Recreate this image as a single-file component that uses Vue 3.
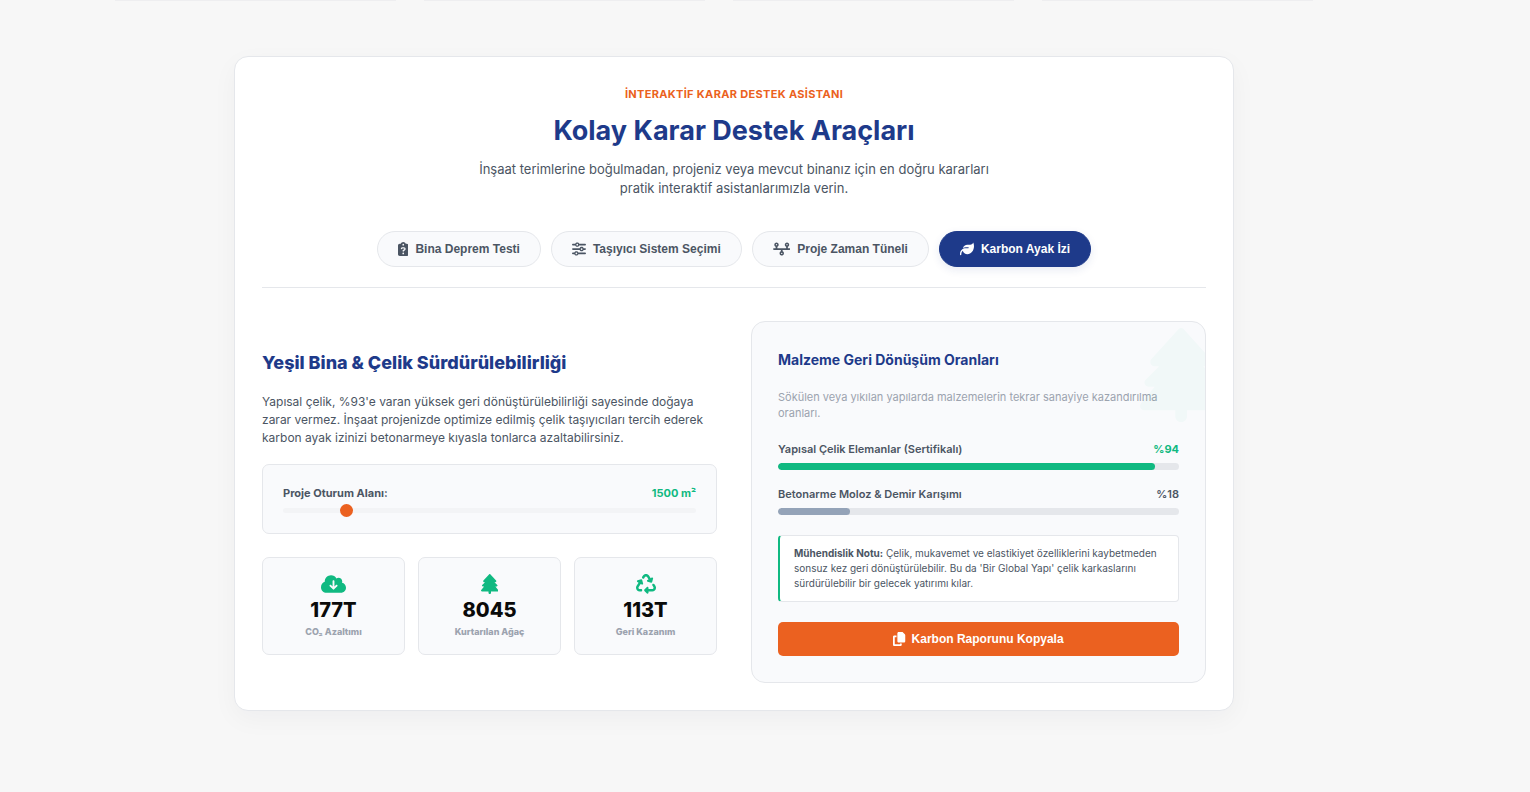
<template>
  <main class="page">
    <div class="previous-cards" aria-hidden="true">
      <div v-for="n in 4" :key="n" class="previous-card"></div>
    </div>

    <section class="tools-card">
      <header class="tools-header">
        <span class="tools-label">İNTERAKTİF KARAR DESTEK ASİSTANI</span>
        <h2 class="tools-title">Kolay Karar Destek Araçları</h2>
        <p class="tools-subtitle">
          İnşaat terimlerine boğulmadan, projeniz veya mevcut binanız için en doğru kararları pratik
          interaktif asistanlarımızla verin.
        </p>
      </header>

      <nav class="tabs">
        <button
          v-for="tab in tabs"
          :key="tab.id"
          type="button"
          class="tab"
          :class="{ active: activeTab === tab.id }"
          @click="activeTab = tab.id"
        >
          <svg class="tab-icon" :viewBox="icons[tab.icon].box" aria-hidden="true">
            <path :d="icons[tab.icon].path" />
          </svg>
          {{ tab.label }}
        </button>
      </nav>

      <div class="tool-grid">
        <!-- Hesaplayıcı -->
        <div class="calculator">
          <h3 class="calculator-title">Yeşil Bina &amp; Çelik Sürdürülebilirliği</h3>
          <p class="calculator-text">
            Yapısal çelik, %93'e varan yüksek geri dönüştürülebilirliği sayesinde doğaya zarar
            vermez. İnşaat projenizde optimize edilmiş çelik taşıyıcıları tercih ederek karbon ayak
            izinizi betonarmeye kıyasla tonlarca azaltabilirsiniz.
          </p>

          <div class="area-box">
            <div class="area-row">
              <label for="area">Proje Oturum Alanı:</label>
              <output for="area" class="green">{{ area }} m²</output>
            </div>
            <input id="area" v-model.number="area" type="range" min="100" max="10000" step="50" />
          </div>

          <div class="stats">
            <div v-for="stat in stats" :key="stat.label" class="stat">
              <svg class="stat-icon" :viewBox="icons[stat.icon].box" aria-hidden="true">
                <path :d="icons[stat.icon].path" />
              </svg>
              <strong class="stat-value">{{ stat.value }}</strong>
              <span class="stat-label">{{ stat.label }}</span>
            </div>
          </div>
        </div>

        <!-- Geri dönüşüm paneli -->
        <div class="panel">
          <svg class="panel-tree" :viewBox="icons.tree.box" aria-hidden="true">
            <path :d="icons.tree.path" />
          </svg>
          <h4 class="panel-title">Malzeme Geri Dönüşüm Oranları</h4>
          <p class="panel-text">
            Sökülen veya yıkılan yapılarda malzemelerin tekrar sanayiye kazandırılma oranları.
          </p>

          <div v-for="rate in rates" :key="rate.label" class="rate">
            <div class="rate-row">
              <span>{{ rate.label }}</span>
              <span :class="{ green: rate.green }">%{{ rate.value }}</span>
            </div>
            <div class="rate-track">
              <div
                class="rate-fill"
                :class="{ 'rate-fill-green': rate.green }"
                :style="{ width: rate.value + '%' }"
              ></div>
            </div>
          </div>

          <p class="note">
            <strong>Mühendislik Notu:</strong> Çelik, mukavemet ve elastikiyet özelliklerini
            kaybetmeden sonsuz kez geri dönüştürülebilir. Bu da 'Bir Global Yapı' çelik karkaslarını
            sürdürülebilir bir gelecek yatırımı kılar.
          </p>

          <button type="button" class="copy-button" @click="copyReport">
            <svg class="copy-icon" :viewBox="icons.copy.box" aria-hidden="true">
              <path :d="icons.copy.path" />
            </svg>
            Karbon Raporunu Kopyala
          </button>
        </div>
      </div>
    </section>
  </main>
</template>

<script setup>
import { computed, ref } from 'vue'

const icons = {
  clipboard: {
    box: '0 0 384 512',
    path: 'M192 0c-41.8 0-77.4 26.7-90.5 64H64C28.7 64 0 92.7 0 128V448c0 35.3 28.7 64 64 64H320c35.3 0 64-28.7 64-64V128c0-35.3-28.7-64-64-64H282.5C269.4 26.7 233.8 0 192 0zm0 64a32 32 0 1 1 0 64 32 32 0 1 1 0-64zM105.8 229.3c7.9-22.3 29.1-37.3 52.8-37.3h58.3c34.9 0 63.1 28.3 63.1 63.1c0 22.6-12.1 43.5-31.7 54.8L216 328.4c-.2 13-10.9 23.6-24 23.6c-13.3 0-24-10.7-24-24V314.5c0-8.6 4.6-16.5 12.1-20.8l44.3-25.4c4.7-2.7 7.6-7.7 7.6-13.1c0-8.4-6.8-15.1-15.1-15.1H158.6c-3.4 0-6.4 2.1-7.5 5.3l-.4 1.2c-4.4 12.5-18.2 19-30.6 14.6s-19-18.2-14.6-30.6l.4-1.2zM160 416a32 32 0 1 1 64 0 32 32 0 1 1 -64 0z',
  },
  sliders: {
    box: '0 0 512 512',
    path: 'M0 416c0 17.7 14.3 32 32 32l54.7 0c12.3 28.3 40.5 48 73.3 48s61-19.7 73.3-48L480 448c17.7 0 32-14.3 32-32s-14.3-32-32-32l-246.7 0c-12.3-28.3-40.5-48-73.3-48s-61 19.7-73.3 48L32 384c-17.7 0-32 14.3-32 32zm128 0a32 32 0 1 1 64 0 32 32 0 1 1 -64 0zM320 256a32 32 0 1 1 64 0 32 32 0 1 1 -64 0zm32-80c-32.8 0-61 19.7-73.3 48L32 224c-17.7 0-32 14.3-32 32s14.3 32 32 32l246.7 0c12.3 28.3 40.5 48 73.3 48s61-19.7 73.3-48l54.7 0c17.7 0 32-14.3 32-32s-14.3-32-32-32l-54.7 0c-12.3-28.3-40.5-48-73.3-48zM192 128a32 32 0 1 1 0-64 32 32 0 1 1 0 64zm73.3-64C253 35.7 224.8 16 192 16s-61 19.7-73.3 48L32 64C14.3 64 0 78.3 0 96s14.3 32 32 32l86.7 0c12.3 28.3 40.5 48 73.3 48s61-19.7 73.3-48L480 128c17.7 0 32-14.3 32-32s-14.3-32-32-32L265.3 64z',
  },
  timeline: {
    box: '0 0 640 512',
    path: 'M128 72a24 24 0 1 1 0 48 24 24 0 1 1 0-48zm32 97.3c28.3-12.3 48-40.5 48-73.3c0-44.2-35.8-80-80-80S48 51.8 48 96c0 32.8 19.7 61 48 73.3V224H32c-17.7 0-32 14.3-32 32s14.3 32 32 32H288v54.7c-28.3 12.3-48 40.5-48 73.3c0 44.2 35.8 80 80 80s80-35.8 80-80c0-32.8-19.7-61-48-73.3V288H608c17.7 0 32-14.3 32-32s-14.3-32-32-32H544V169.3c28.3-12.3 48-40.5 48-73.3c0-44.2-35.8-80-80-80s-80 35.8-80 80c0 32.8 19.7 61 48 73.3V224H160V169.3zM488 96a24 24 0 1 1 48 0 24 24 0 1 1 -48 0zM320 392a24 24 0 1 1 0 48 24 24 0 1 1 0-48z',
  },
  leaf: {
    box: '0 0 512 512',
    path: 'M272 96c-78.6 0-145.1 51.5-167.7 122.5c33.6-17 71.5-26.5 111.7-26.5h88c8.8 0 16 7.2 16 16s-7.2 16-16 16H288 216s0 0 0 0c-16.6 0-32.7 1.9-48.2 5.4c-25.9 5.9-50 16.4-71.4 30.7c0 0 0 0 0 0C38.3 298.8 0 364.9 0 440v16c0 13.3 10.7 24 24 24s24-10.7 24-24V440c0-48.7 20.7-92.5 53.8-123.2C121.6 392.3 190.3 448 272 448l1 0c132.1-.7 239-130.9 239-291.4c0-42.6-7.5-83.1-21.1-119.6c-2.6-6.9-12.7-6.6-16.2-.1C455.9 72.1 418.7 96 376 96L272 96z',
  },
  cloud: {
    box: '0 0 640 512',
    path: 'M144 480C64.5 480 0 415.5 0 336c0-62.8 40.2-116.2 96.2-135.9c-.1-2.7-.2-5.4-.2-8.1c0-88.4 71.6-160 160-160c59.3 0 111 32.2 138.7 80.2C409.9 102 428.3 96 448 96c53 0 96 43 96 96c0 12.2-2.3 23.8-6.4 34.6C596 238.4 640 290.1 640 352c0 70.7-57.3 128-128 128H144zm79-167l80 80c9.4 9.4 24.6 9.4 33.9 0l80-80c9.4-9.4 9.4-24.6 0-33.9s-24.6-9.4-33.9 0l-39 39V184c0-13.3-10.7-24-24-24s-24 10.7-24 24V318.1l-39-39c-9.4-9.4-24.6-9.4-33.9 0s-9.4 24.6 0 33.9z',
  },
  tree: {
    box: '0 0 448 512',
    path: 'M210.6 5.9L62 169.4c-3.9 4.2-6 9.8-6 15.5C56 197.7 66.3 208 79.1 208H104L30.6 281.4c-4.2 4.2-6.6 10-6.6 16C24 309.9 34.1 320 46.6 320H80L5.4 409.5C1.9 413.7 0 419 0 424.5c0 13 10.5 23.5 23.5 23.5H192v32c0 17.7 14.3 32 32 32s32-14.3 32-32V448H424.5c13 0 23.5-10.5 23.5-23.5c0-5.5-1.9-10.8-5.4-15L368 320h33.4c12.5 0 22.6-10.1 22.6-22.6c0-6-2.4-11.8-6.6-16L344 208h24.9c12.7 0 23.1-10.3 23.1-23.1c0-5.7-2.1-11.3-6-15.5L237.4 5.9C234 2.1 229.1 0 224 0s-10 2.1-13.4 5.9z',
  },
  recycle: {
    box: '0 0 512 512',
    path: 'M174.7 45.1C192.2 17 223 0 256 0s63.8 17 81.3 45.1l38.6 61.7 27-15.6c8.4-4.9 18.9-4.2 26.6 1.7s11.1 15.9 8.6 25.3l-23.4 87.4c-3.4 12.8-16.6 20.4-29.4 17l-87.4-23.4c-9.4-2.5-16.3-10.4-17.6-20s3.4-19.1 11.8-23.9l28.4-16.4L283 79c-5.8-9.3-16-15-27-15s-21.2 5.7-27 15l-17.5 28c-9.2 14.8-28.6 19.5-43.6 10.5c-15.3-9.2-20.2-29.2-10.7-44.4l17.5-28zM429.5 251.9c15-9 34.4-4.3 43.6 10.5l24.4 39.1c9.4 15.1 14.4 32.4 14.6 50.2c.3 53.1-42.7 96.4-95.8 96.4L320 448v32c0 9.7-5.8 18.5-14.8 22.2s-19.3 1.7-26.2-5.2l-64-64c-9.4-9.4-9.4-24.6 0-33.9l64-64c6.9-6.9 17.2-8.9 26.2-5.2s14.8 12.5 14.8 22.2v32l96.2 0c17.6 0 31.9-14.4 31.8-32c0-5.9-1.7-11.7-4.8-16.7l-24.4-39.1c-9.5-15.2-4.7-35.2 10.7-44.4zm-364.6-31L36 204.2c-8.4-4.9-13.1-14.3-11.8-23.9s8.2-17.5 17.6-20l87.4-23.4c12.8-3.4 26 4.2 29.4 17L182 241.2c2.5 9.4-.9 19.3-8.6 25.3s-18.2 6.6-26.6 1.7l-26.5-15.3L68.8 335.3c-3.1 5-4.8 10.8-4.8 16.7c-.1 17.6 14.2 32 31.8 32l32.2 0c17.7 0 32 14.3 32 32s-14.3 32-32 32l-32.2 0C42.7 448-.3 404.8 0 351.6c.1-17.8 5.1-35.1 14.6-50.2l50.3-80.5z',
  },
  copy: {
    box: '0 0 448 512',
    path: 'M208 0H332.1c12.7 0 24.9 5.1 33.9 14.1l67.9 67.9c9 9 14.1 21.2 14.1 33.9V336c0 26.5-21.5 48-48 48H208c-26.5 0-48-21.5-48-48V48c0-26.5 21.5-48 48-48zM48 128h80v64H64V448H256V416h64v48c0 26.5-21.5 48-48 48H48c-26.5 0-48-21.5-48-48V176c0-26.5 21.5-48 48-48z',
  },
}

const tabs = [
  { id: 'deprem', label: 'Bina Deprem Testi', icon: 'clipboard' },
  { id: 'sistem', label: 'Taşıyıcı Sistem Seçimi', icon: 'sliders' },
  { id: 'zaman', label: 'Proje Zaman Tüneli', icon: 'timeline' },
  { id: 'karbon', label: 'Karbon Ayak İzi', icon: 'leaf' },
]

const rates = [
  { label: 'Yapısal Çelik Elemanlar (Sertifikalı)', value: 94, green: true },
  { label: 'Betonarme Moloz & Demir Karışımı', value: 18, green: false },
]

const activeTab = ref('karbon')
const area = ref(1500)

// Alan (m²) üzerinden yaklaşık tasarruf değerleri
const co2 = computed(() => Math.round(area.value * 0.118))
const trees = computed(() => Math.round((co2.value * 1000) / 22))
const recycled = computed(() => Math.round(area.value * 0.075))

const stats = computed(() => [
  { icon: 'cloud', value: `${co2.value}T`, label: 'CO₂ Azaltımı' },
  { icon: 'tree', value: trees.value, label: 'Kurtarılan Ağaç' },
  { icon: 'recycle', value: `${recycled.value}T`, label: 'Geri Kazanım' },
])

const copyReport = () => {
  const report = stats.value.map((stat) => `${stat.label}: ${stat.value}`).join('\n')
  navigator.clipboard?.writeText(report)
}
</script>

<style>
body {
  margin: 0;
  background-color: #f7f7f7;
}
</style>

<style scoped>
.page {
  --color-primary: #1e3a8a;
  --color-accent: #eb6120;
  --color-green: #10b981;
  --color-text: #4b5563;
  --color-muted: #9ca3af;
  --color-border: #e5e7eb;
  --color-soft: #f9fafc;
  box-sizing: border-box;
  padding: 0 62px 80px 0;
  font-family: Inter, 'Liberation Sans', sans-serif;
  color: var(--color-text);
}

.page * {
  box-sizing: border-box;
}

h2,
h3,
h4,
p {
  margin: 0;
}

svg {
  display: block;
  fill: currentColor;
}

.green {
  color: var(--color-green);
}

/* --- Önceki bölümün kart kenarları --- */
.previous-cards {
  display: flex;
  gap: 28px;
  max-width: 1198px;
  margin-left: 115px;
  overflow: hidden;
}

.previous-card {
  flex: 0 0 281px;
  height: 1px;
  background-color: #eeeef0;
}

/* --- Ana kart --- */
.tools-card {
  max-width: 1000px;
  margin: 55px auto 0;
  padding: 27px;
  background-color: #ffffff;
  border: 1px solid var(--color-border);
  border-radius: 14px;
  box-shadow: 0 8px 26px rgba(15, 23, 42, 0.04);
}

.tools-header {
  display: flex;
  flex-direction: column;
  align-items: center;
  text-align: center;
}

.tools-label {
  font-size: 11px;
  line-height: 20px;
  font-weight: 700;
  letter-spacing: 0.03em;
  color: var(--color-accent);
}

.tools-title {
  margin-top: 6px;
  font-size: 27px;
  line-height: 42px;
  font-weight: 700;
  color: var(--color-primary);
}

.tools-subtitle {
  max-width: 510px;
  margin-top: 8px;
  font-size: 13px;
  line-height: 19px;
}

/* --- Sekmeler --- */
.tabs {
  display: flex;
  flex-wrap: wrap;
  justify-content: center;
  gap: 10px;
  margin-top: 33px;
  padding-bottom: 20px;
  border-bottom: 1px solid var(--color-border);
}

.tab {
  display: flex;
  align-items: center;
  gap: 7px;
  height: 36px;
  padding: 0 20px;
  font-family: 'Liberation Sans', Arial, sans-serif;
  font-size: 12px;
  font-weight: 700;
  color: var(--color-text);
  background-color: var(--color-soft);
  border: 1px solid var(--color-border);
  border-radius: 18px;
  cursor: pointer;
}

.tab.active {
  color: #ffffff;
  background-color: var(--color-primary);
  border-color: var(--color-primary);
  box-shadow: 0 3px 8px rgba(30, 58, 138, 0.1);
}

.tab-icon,
.copy-icon {
  height: 14px;
}

/* --- İki sütun --- */
.tool-grid {
  display: grid;
  grid-template-columns: 1fr 1fr;
  align-items: center;
  gap: 34px;
  margin-top: 33px;
}

.calculator-title {
  font-size: 18px;
  line-height: 27px;
  font-weight: 800;
  color: var(--color-primary);
}

.calculator-text {
  margin-top: 17px;
  font-size: 12px;
  line-height: 18px;
}

.area-box {
  margin-top: 17px;
  padding: 20px;
  background-color: var(--color-soft);
  border: 1px solid var(--color-border);
  border-radius: 7px;
}

.area-row,
.rate-row {
  display: flex;
  justify-content: space-between;
  font-size: 11px;
  line-height: 16px;
}

.area-row {
  font-weight: 700;
}

.rate-row {
  font-weight: 600;
}

.rate-row .green {
  font-weight: 700;
}

input[type='range'] {
  display: block;
  width: 100%;
  height: 5px;
  margin: 7px 0 0;
  appearance: none;
  background-color: #f3f4f6;
  border-radius: 3px;
  cursor: pointer;
}

input[type='range']::-webkit-slider-thumb {
  appearance: none;
  width: 13px;
  height: 13px;
  background-color: var(--color-accent);
  border-radius: 50%;
}

.stats {
  display: grid;
  grid-template-columns: repeat(3, 1fr);
  gap: 13px;
  margin-top: 23px;
}

.stat {
  display: flex;
  flex-direction: column;
  align-items: center;
  padding: 16px 13px;
  text-align: center;
  background-color: var(--color-soft);
  border: 1px solid var(--color-border);
  border-radius: 7px;
}

.stat-icon {
  height: 20px;
  color: var(--color-green);
}

.stat-value {
  margin-top: 1px;
  font-size: 20px;
  line-height: 30px;
  font-weight: 800;
  color: #0a0a0a;
}

.stat-label {
  font-size: 9px;
  line-height: 13px;
  font-weight: 800;
  color: var(--color-muted);
}

/* --- Panel --- */
.panel {
  position: relative;
  overflow: hidden;
  padding: 26px;
  background-color: var(--color-soft);
  border: 1px solid var(--color-border);
  border-radius: 14px;
}

.panel-tree {
  position: absolute;
  top: 6px;
  right: -17px;
  height: 94px;
  color: var(--color-green);
  opacity: 0.03;
}

.panel-title {
  font-size: 14px;
  line-height: 24px;
  font-weight: 700;
  color: var(--color-primary);
}

.panel-text {
  margin-top: 17px;
  font-size: 11px;
  line-height: 16px;
  color: var(--color-muted);
}

.rate {
  margin-top: 16px;
}

.panel-text + .rate {
  margin-top: 20px;
}

.rate-track {
  height: 7px;
  margin-top: 6px;
  overflow: hidden;
  background-color: var(--color-border);
  border-radius: 4px;
}

.rate-fill {
  height: 100%;
  background-color: #94a3b8;
  border-radius: 4px;
}

.rate-fill-green {
  background-color: var(--color-green);
}

.note {
  margin-top: 20px;
  padding: 10px 14px;
  font-size: 10px;
  line-height: 15px;
  background-color: #ffffff;
  border: 1px solid var(--color-border);
  border-left: 2px solid var(--color-green);
  border-radius: 4px;
}

.copy-button {
  display: flex;
  align-items: center;
  justify-content: center;
  gap: 6px;
  width: 100%;
  height: 34px;
  margin-top: 20px;
  font-family: 'Liberation Sans', Arial, sans-serif;
  font-size: 12px;
  font-weight: 700;
  color: #ffffff;
  background-color: var(--color-accent);
  border: none;
  border-radius: 5px;
  cursor: pointer;
}

@media (max-width: 800px) {
  .page {
    padding: 0 16px 40px;
  }
  .previous-cards {
    margin-left: 0;
  }
  .tool-grid {
    grid-template-columns: 1fr;
  }
}
</style>
